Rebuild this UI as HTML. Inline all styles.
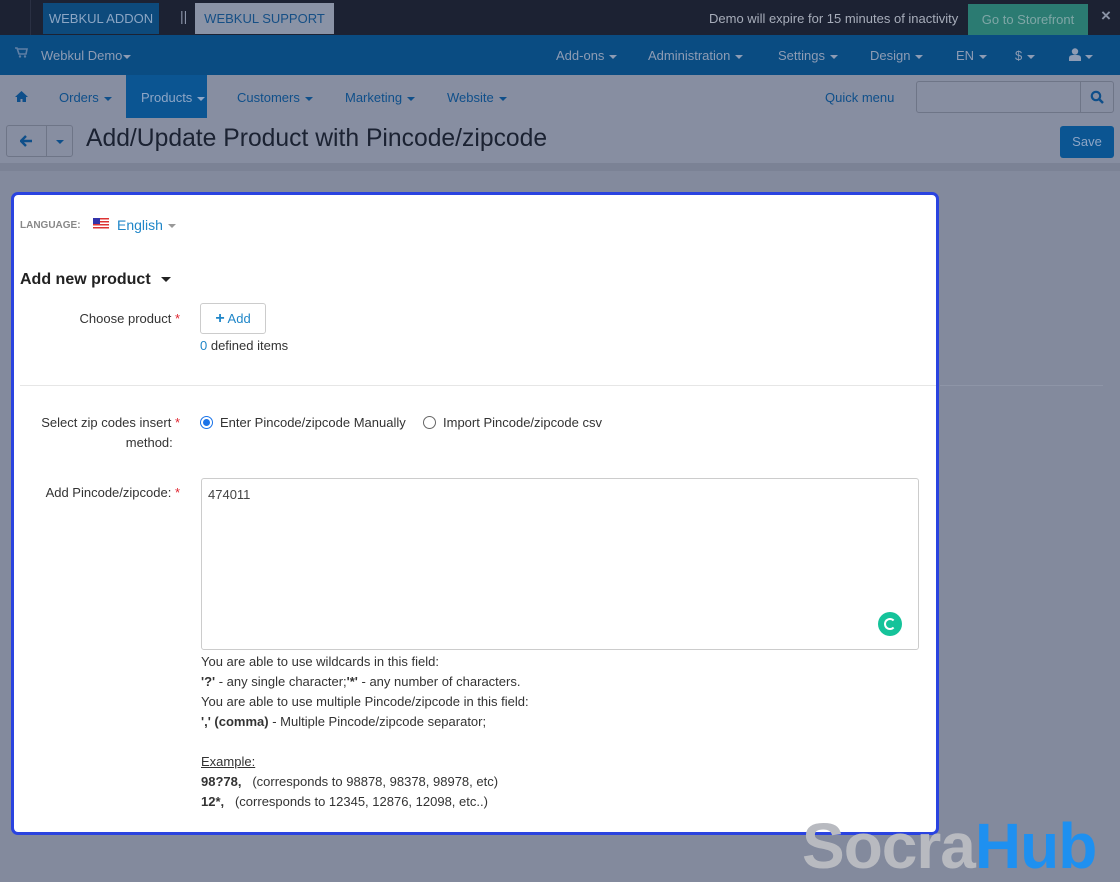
<!DOCTYPE html>
<html><head><meta charset="utf-8"><style>
*{box-sizing:border-box;margin:0;padding:0}
body{width:1120px;height:880px;overflow:hidden;background:#838a9d;font-family:"Liberation Sans",Arial,sans-serif;position:relative;font-size:13px}
.abs{position:absolute}
.top{left:0;top:0;width:1120px;height:35px;background:#1c2233}
.blue{left:0;top:35px;width:1120px;height:40px;background:#0a4c82}
.nav{left:0;top:75px;width:1120px;height:88px;background:#878ea1}
.strip{left:0;top:163px;width:1120px;height:8px;background:#7b8295}
.w{color:#8e9cb4;font-size:13px}
.bl{color:#0f4f8a;font-size:13px}
.caret{display:inline-block;width:0;height:0;border-left:4px solid transparent;border-right:4px solid transparent;border-top:4px solid currentColor;vertical-align:middle;margin-left:5px}
.card{left:11px;top:192px;width:928px;height:643px;background:#fff;border:3px solid #2a43e0;border-radius:7px}
.lbl{color:#333;font-size:13px;text-align:right;width:160px}
.req{color:#e0242f}
.t{color:#333;font-size:13px}
</style></head><body>
<div class="abs top"></div>
<div class="abs" style="left:30px;top:0;width:1px;height:35px;background:#2a3043"></div>
<div class="abs" style="left:43px;top:3px;width:116px;height:31px;background:#0d4a7c;color:#8ca6c4;font-size:13px;line-height:31px;text-align:center">WEBKUL ADDON</div>
<div class="abs" style="left:180px;top:8px;color:#8a93a8;font-size:14px">||</div>
<div class="abs" style="left:195px;top:3px;width:139px;height:31px;background:#8a93a6;color:#164f85;font-size:13px;line-height:31px;text-align:center">WEBKUL SUPPORT</div>
<div class="abs" style="left:709px;top:11px;color:#a7adba;font-size:13px">Demo will expire for 15 minutes of inactivity</div>
<div class="abs" style="left:968px;top:4px;width:120px;height:31px;background:#2b7b72;color:#7fa6a6;font-size:13px;line-height:32px;text-align:center">Go to Storefront</div>
<div class="abs" style="left:1101px;top:6px;color:#8a93a6;font-size:17px;font-weight:bold">×</div>

<div class="abs blue"></div>
<svg class="abs" style="left:15px;top:47px" width="13" height="11"><path d="M0 1h2l2 6h7l1-5H3" fill="none" stroke="#5f7fa5" stroke-width="1.6"/><circle cx="5" cy="9.5" r="1.2" fill="#5f7fa5"/><circle cx="10" cy="9.5" r="1.2" fill="#5f7fa5"/></svg>
<div class="abs w" style="left:41px;top:48px">Webkul Demo<span class="caret" style="margin-left:1px"></span></div>
<div class="abs w" style="left:556px;top:48px">Add-ons<span class="caret"></span></div>
<div class="abs w" style="left:648px;top:48px">Administration<span class="caret"></span></div>
<div class="abs w" style="left:778px;top:48px">Settings<span class="caret"></span></div>
<div class="abs w" style="left:870px;top:48px">Design<span class="caret"></span></div>
<div class="abs w" style="left:956px;top:48px">EN<span class="caret"></span></div>
<div class="abs w" style="left:1015px;top:48px">$<span class="caret"></span></div>
<svg class="abs" style="left:1069px;top:48px" width="12" height="13"><circle cx="6" cy="3.5" r="3.2" fill="#8e9cb4"/><path d="M0 13v-3q0-3 4-3h4q4 0 4 3v3z" fill="#8e9cb4"/></svg>
<div class="abs w" style="left:1080px;top:48px"><span class="caret"></span></div>

<div class="abs nav"></div>
<div class="abs strip"></div>
<div class="abs" style="left:126px;top:75px;width:81px;height:43px;background:#0b5592"></div>
<svg class="abs" style="left:15px;top:91px" width="13" height="11"><path d="M6.5 0L0 6h2v5h3.5V8h2v3H11V6h2z" fill="#0f4f8a"/></svg>
<div class="abs bl" style="left:59px;top:90px">Orders<span class="caret"></span></div>
<div class="abs" style="left:141px;top:90px;color:#8ea6c6;font-size:13px">Products<span class="caret"></span></div>
<div class="abs bl" style="left:237px;top:90px">Customers<span class="caret"></span></div>
<div class="abs bl" style="left:345px;top:90px">Marketing<span class="caret"></span></div>
<div class="abs bl" style="left:447px;top:90px">Website<span class="caret"></span></div>
<div class="abs bl" style="left:825px;top:90px">Quick menu</div>
<div class="abs" style="left:916px;top:81px;width:198px;height:32px;border:1px solid #6e7587;border-radius:3px"></div>
<div class="abs" style="left:1080px;top:81px;width:1px;height:32px;background:#6e7587"></div>
<svg class="abs" style="left:1090px;top:90px" width="14" height="14"><circle cx="6" cy="6" r="4.2" fill="none" stroke="#0f4f8a" stroke-width="2.2"/><line x1="9" y1="9" x2="13" y2="13" stroke="#0f4f8a" stroke-width="2.5"/></svg>

<div class="abs" style="left:6px;top:125px;width:67px;height:32px;border:1px solid #6e7587;border-radius:3px"></div>
<div class="abs" style="left:46px;top:125px;width:1px;height:32px;background:#6e7587"></div>
<svg class="abs" style="left:20px;top:135px" width="13" height="12"><path d="M6 1L1 6l5 5M1 6h11" fill="none" stroke="#0f4f8a" stroke-width="2.4"/></svg>
<div class="abs bl" style="left:51px;top:133px"><span class="caret"></span></div>
<div class="abs" style="left:86px;top:125px;color:#1b2232;font-size:24.7px">Add/Update Product with Pincode/zipcode</div>
<div class="abs" style="left:1060px;top:126px;width:54px;height:32px;background:#0b5592;border-radius:3px;color:#8ea6c6;font-size:13px;line-height:32px;text-align:center">Save</div>

<div class="abs" style="left:940px;top:385px;width:163px;height:1px;background:#8e95a7"></div>

<div class="abs card"></div>
<div class="abs" style="left:20px;top:220px;color:#888;font-size:10px;font-weight:bold">LANGUAGE:</div>
<div class="abs" style="left:93px;top:218px;width:16px;height:11px;background:repeating-linear-gradient(#d33 0 1.5px,#fff 1.5px 3px)"><div style="width:7px;height:6px;background:#33a"></div></div>
<div class="abs" style="left:117px;top:217px;color:#1f86c8;font-size:14px">English<span class="caret" style="color:#999"></span></div>
<div class="abs" style="left:20px;top:271px;color:#222;font-size:16px;font-weight:bold">Add new product<span class="caret" style="border-width:5px 5px 0;margin-left:10px"></span></div>
<div class="abs lbl" style="left:20px;top:311px">Choose product<span class="req"> *</span></div>
<div class="abs" style="left:200px;top:303px;width:66px;height:31px;border:1px solid #ccc;border-radius:3px;color:#1f86c8;font-size:13px;line-height:30px;text-align:center"><b style="font-size:16px">+</b> Add</div>
<div class="abs t" style="left:200px;top:338px"><span style="color:#1f86c8">0</span> defined items</div>
<div class="abs" style="left:20px;top:385px;width:916px;height:1px;background:#e6e6e6"></div>
<div class="abs lbl" style="left:20px;top:413px;line-height:20px">Select zip codes insert<span class="req"> *</span><br>method:&nbsp;&nbsp;</div>
<div class="abs" style="left:200px;top:416px;width:13px;height:13px;border:1px solid #1a73e8;border-radius:50%"><div style="margin:2px;width:7px;height:7px;border-radius:50%;background:#1a73e8"></div></div>
<div class="abs t" style="left:220px;top:415px">Enter Pincode/zipcode Manually</div>
<div class="abs" style="left:423px;top:416px;width:13px;height:13px;border:1px solid #666;border-radius:50%"></div>
<div class="abs t" style="left:443px;top:415px">Import Pincode/zipcode csv</div>
<div class="abs lbl" style="left:20px;top:485px">Add Pincode/zipcode:<span class="req"> *</span></div>
<div class="abs" style="left:201px;top:478px;width:718px;height:172px;border:1px solid #ccc;border-radius:3px"></div>
<div class="abs t" style="left:208px;top:487px;color:#444">474011</div>
<div class="abs" style="left:878px;top:612px;width:24px;height:24px;border-radius:50%;background:#15c39a"><div style="margin:6px;width:12px;height:12px;border:2px solid #fff;border-radius:50%;border-right-color:transparent"></div></div>
<div class="abs t" style="left:201px;top:652px;line-height:20px">You are able to use wildcards in this field:<br><b>'?'</b> - any single character;<b>'*'</b> - any number of characters.<br>You are able to use multiple Pincode/zipcode in this field:<br><b>',' (comma)</b> - Multiple Pincode/zipcode separator;<br><br><u>Example:</u><br><b>98?78,</b>&nbsp;&nbsp;&nbsp;(corresponds to 98878, 98378, 98978, etc)<br><b>12*,</b>&nbsp;&nbsp;&nbsp;(corresponds to 12345, 12876, 12098, etc..)</div>
<div class="abs" style="left:802px;top:810px;font-size:64px;font-weight:bold;line-height:72px;letter-spacing:-1px"><span style="color:#b8bac0">Socra</span><span style="color:#1e90f0">Hub</span></div>
</body></html>
